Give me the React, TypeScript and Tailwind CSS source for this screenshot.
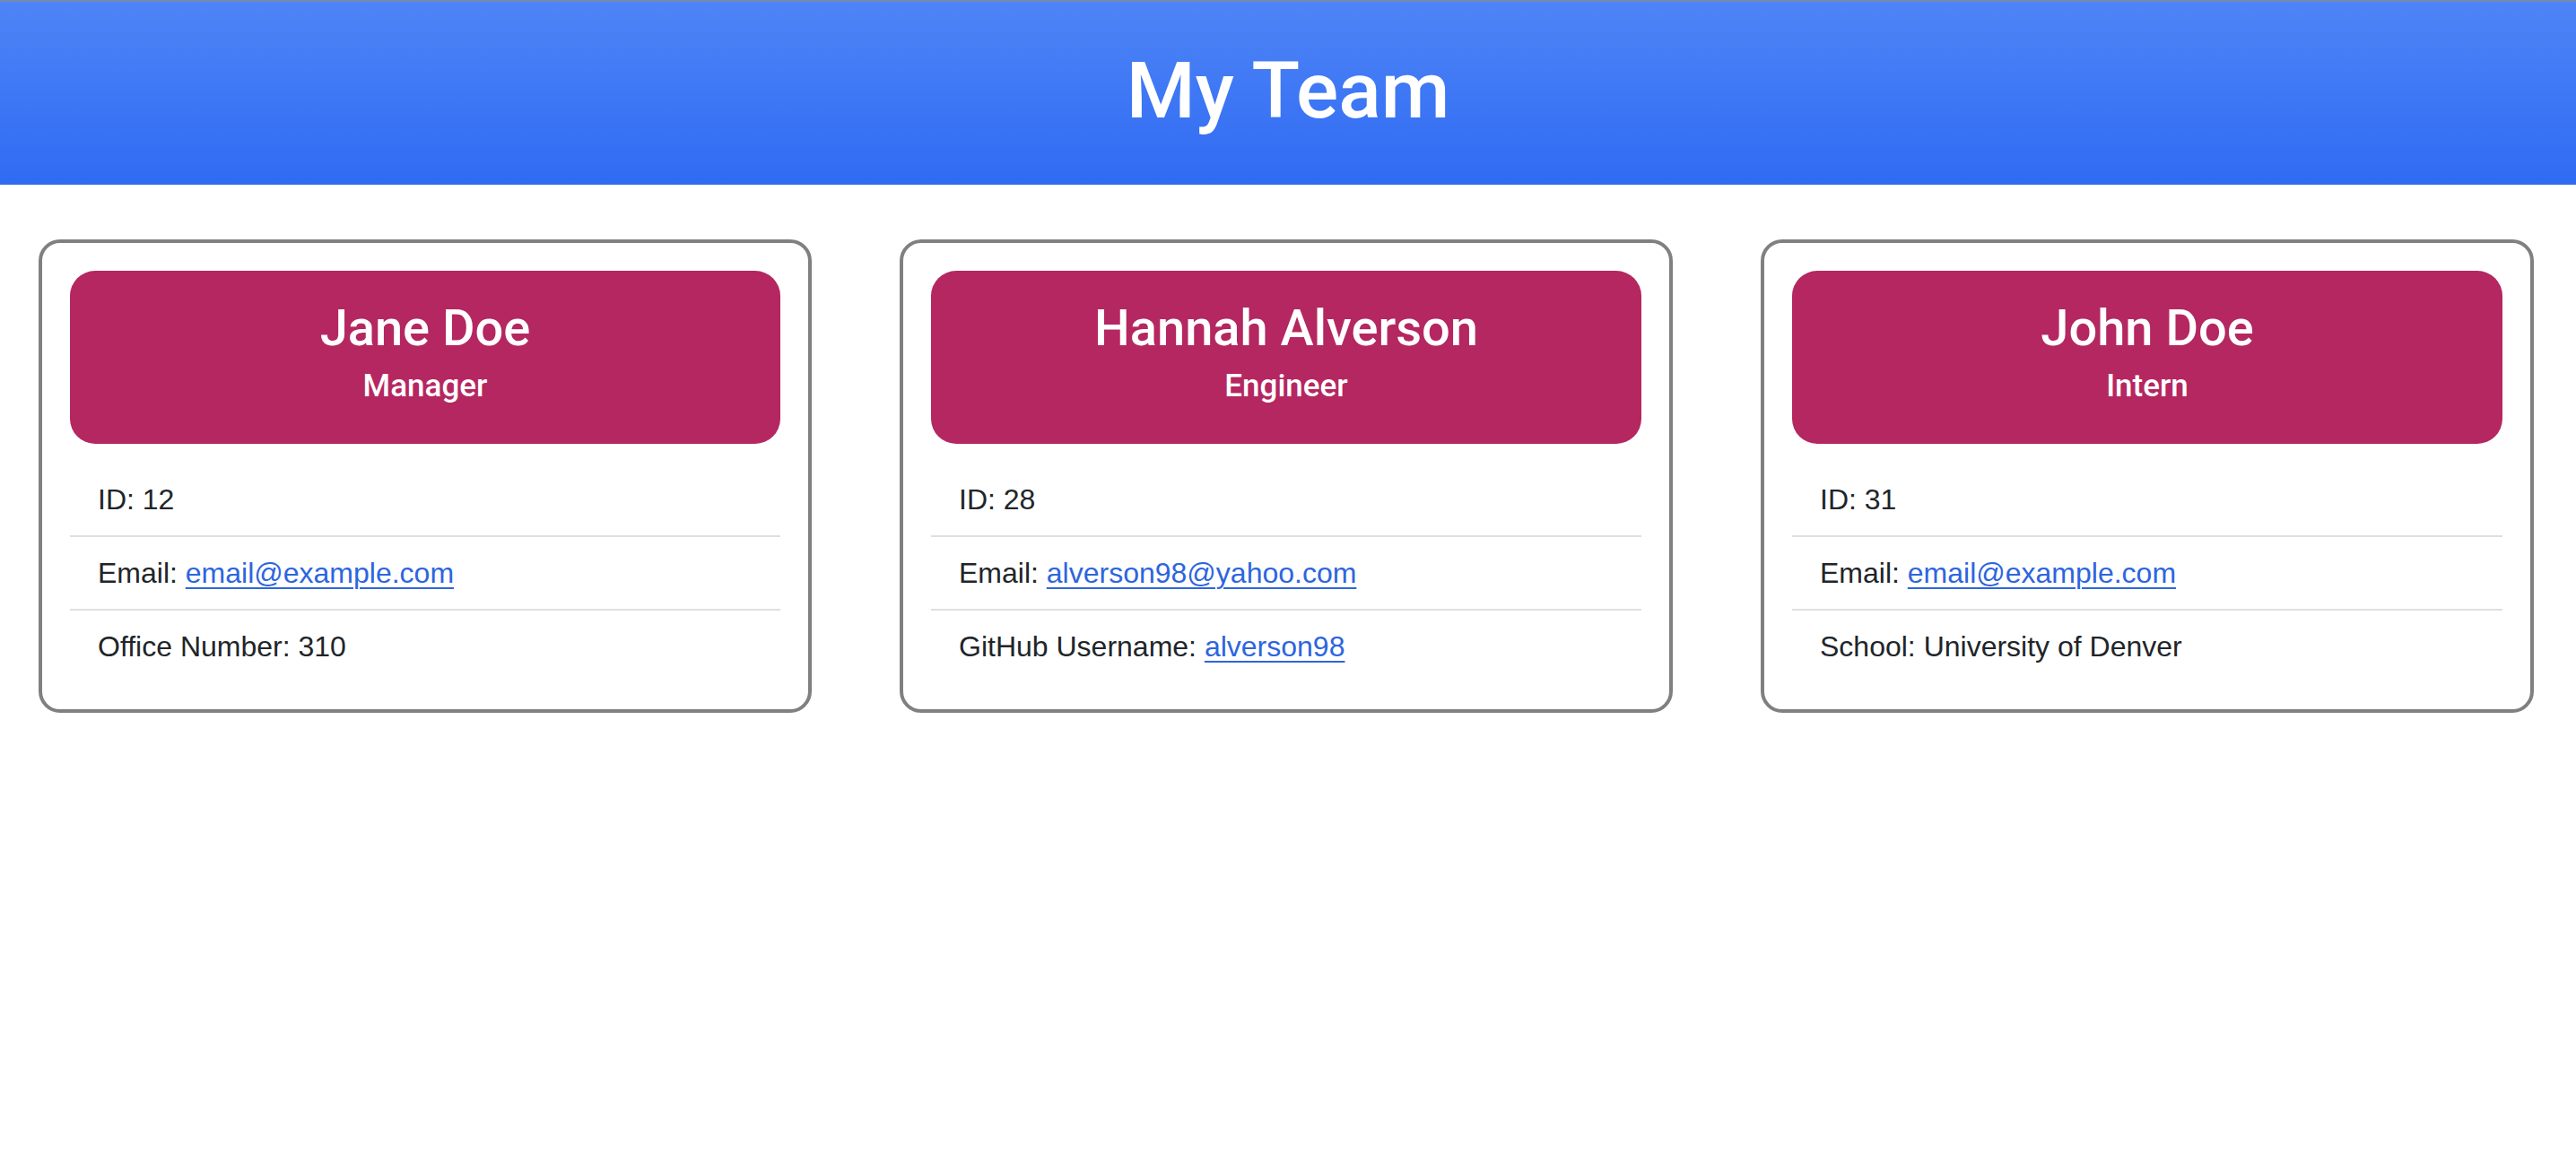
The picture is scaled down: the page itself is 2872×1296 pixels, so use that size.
import React from "react";

interface Employee {
    name: string;
    role: string;
    id: number;
    email: string;
    extraLabel: string;
    extraValue: string;
    extraIsLink?: boolean;
}

const team: Employee[] = [
    { name: "Jane Doe", role: "Manager", id: 12, email: "email@example.com", extraLabel: "Office Number", extraValue: "310" },
    { name: "Hannah Alverson", role: "Engineer", id: 28, email: "alverson98@yahoo.com", extraLabel: "GitHub Username", extraValue: "alverson98", extraIsLink: true },
    { name: "John Doe", role: "Intern", id: 31, email: "email@example.com", extraLabel: "School", extraValue: "University of Denver" },
];

const linkClass = "text-[#2d65de] underline decoration-[2px] underline-offset-[5px]";

const EmployeeCard: React.FC<{ employee: Employee }> = ({ employee }) => {
    return (
        <div className="w-[862px] shrink-0 border-[4px] border-[#808080] rounded-[24px] bg-white pt-[31px] px-[31px] pb-[30px]">
            {/* Card heading */}
            <div className="bg-[#b42760] rounded-[28px] text-white text-center pt-[31px] pb-[43px] font-['Roboto',Arial,sans-serif]">
                <h2 className="text-[56px] leading-[67px] font-medium">{employee.name}</h2>
                <h3 className="mt-[10px] text-[35px] leading-[42px] font-medium">{employee.role}</h3>
            </div>

            {/* Details */}
            <ul className="mt-[22px] text-[32px] leading-[48px] text-[#212529]">
                <li className="px-[31px] py-[16px] border-b-[2px] border-[#dfdfdf]">ID: {employee.id}</li>
                <li className="px-[31px] py-[16px] border-b-[2px] border-[#dfdfdf]">
                    Email: <a href={`mailto:${employee.email}`} className={linkClass}>{employee.email}</a>
                </li>
                <li className="px-[31px] py-[16px]">
                    {employee.extraLabel}:{" "}
                    {employee.extraIsLink ? (
                        <a href={`https://github.com/${employee.extraValue}`} className={linkClass}>{employee.extraValue}</a>
                    ) : (
                        employee.extraValue
                    )}
                </li>
            </ul>
        </div>
    );
};

export default function App() {
    return (
        <div className="min-h-[1296px] bg-white font-['Liberation_Sans',Arial,sans-serif]">
            <header className="h-[206px] border-t-[2px] border-[#7489b3] bg-linear-to-b from-[#4e84f6] to-[#2f6bf3] flex justify-center pt-[46px]">
                <h1 className="text-[88px] leading-[106px] text-white font-medium font-['Roboto',Arial,sans-serif]">My Team</h1>
            </header>

            <main className="flex gap-[98px] pl-[43px] pt-[61px]">
                {team.map((employee) => (
                    <EmployeeCard key={employee.id} employee={employee} />
                ))}
            </main>
        </div>
    );
}
